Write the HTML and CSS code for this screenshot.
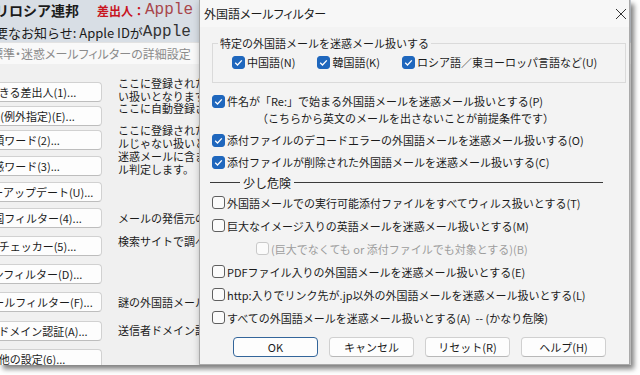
FILE: index.html
```html
<!DOCTYPE html>
<html lang="ja">
<head>
  <meta charset="UTF-8" />
  <meta name="viewport" content="width=device-width, initial-scale=1.0" />
  <title>外国語メールフィルター</title>
  <link rel="stylesheet" href="styles.css">
</head>
<body>
  <div class="screen">
    <div class="mainwin">
      <div class="maillist">
        <div class="mail-row">
          <span class="mail-subject">リロシア連邦</span>
          <span class="mail-from">差出人：</span>
          <span class="mail-addr">Apple &lt;no_reply@apple.com&gt;</span>
        </div>
        <div class="mail-row second">
          <span class="mail-preview">重要なお知らせ: Apple IDが</span>
          <span class="mail-addr dark">Apple ID</span>
        </div>
      </div>

      <div class="win-title"><span>標準・迷惑メールフィルターの詳細設定</span></div>

      <div class="win-body">
        <button class="side-btn">信頼できる差出人(1)...</button>
        <div class="desc span2">ここに登録された差出人からのメールは迷惑メールじゃな<br>い扱いとなります。<br>ここに自動登録されるのは返信した相手です。</div>
        <button class="side-btn">除外先(例外指定)(E)...</button>

        <button class="side-btn">信頼ワード(2)...</button>
        <div class="desc">ここに登録されたワードを含むメールは迷惑メー<br>ルじゃない扱いとなります。</div>

        <button class="side-btn">迷惑ワード(3)...</button>
        <div class="desc">迷惑メールに含まれるワードを登録して迷惑メー<br>ル判定します。</div>

        <button class="side-btn">フィルターアップデート(U)...</button>

        <button class="side-btn">発信元国フィルター(4)...</button>
        <div class="desc single">メールの発信元の国で判定します。</div>

        <button class="side-btn">リンクチェッカー(5)...</button>
        <div class="desc low">検索サイトで調べたURLで判定します。</div>

        <button class="side-btn">ドメインフィルター(D)...</button>

        <button class="side-btn">外国語メールフィルター(F)...</button>
        <div class="desc single">謎の外国語メールを判定します。</div>

        <button class="side-btn">送信者のドメイン認証(A)...</button>
        <div class="desc single">送信者ドメイン認証で判定します。</div>

        <button class="side-btn">その他の設定(6)...</button>
      </div>
    </div>

    <div class="dialog">
      <div class="dlg-title">
        <span>外国語メールフィルター</span>
        <svg class="close" width="12" height="12" viewBox="0 0 12 12">
          <path d="M1 1 L11 11 M11 1 L1 11" stroke="#333" stroke-width="1" fill="none"/>
        </svg>
      </div>

      <div class="dlg-body">
        <fieldset class="group">
          <legend>特定の外国語メールを迷惑メール扱いする</legend>
          <div class="group-row">
            <label class="check"><span class="cb on"><svg width="13" height="13" viewBox="0 0 13 13"><path d="M3.2 6.8 L5.5 9 L9.8 4.4" stroke="#fff" stroke-width="1.3" fill="none"/></svg></span>中国語(N)</label>
            <label class="check"><span class="cb on"><svg width="13" height="13" viewBox="0 0 13 13"><path d="M3.2 6.8 L5.5 9 L9.8 4.4" stroke="#fff" stroke-width="1.3" fill="none"/></svg></span>韓国語(K)</label>
            <label class="check"><span class="cb on"><svg width="13" height="13" viewBox="0 0 13 13"><path d="M3.2 6.8 L5.5 9 L9.8 4.4" stroke="#fff" stroke-width="1.3" fill="none"/></svg></span>ロシア語／東ヨーロッパ言語など(U)</label>
          </div>
        </fieldset>

        <div class="opts">
          <label class="check opt first"><span class="cb on"><svg width="13" height="13" viewBox="0 0 13 13"><path d="M3.2 6.8 L5.5 9 L9.8 4.4" stroke="#fff" stroke-width="1.3" fill="none"/></svg></span>件名が「Re:」で始まる外国語メールを迷惑メール扱いとする(P)</label>
          <div class="opt-note">（こちらから英文のメールを出さないことが前提条件です）</div>
          <label class="check opt"><span class="cb on"><svg width="13" height="13" viewBox="0 0 13 13"><path d="M3.2 6.8 L5.5 9 L9.8 4.4" stroke="#fff" stroke-width="1.3" fill="none"/></svg></span>添付ファイルのデコードエラーの外国語メールを迷惑メール扱いする(O)</label>
          <label class="check opt"><span class="cb on"><svg width="13" height="13" viewBox="0 0 13 13"><path d="M3.2 6.8 L5.5 9 L9.8 4.4" stroke="#fff" stroke-width="1.3" fill="none"/></svg></span>添付ファイルが削除された外国語メールを迷惑メール扱いする(C)</label>

          <div class="sep">少し危険</div>

          <div class="danger">
            <label class="check opt"><span class="cb"></span>外国語メールでの実行可能添付ファイルをすべてウィルス扱いとする(T)</label>
            <label class="check opt"><span class="cb"></span>巨大なイメージ入りの英語メールを迷惑メール扱いとする(M)</label>
            <label class="check opt sub"><span class="cb off"></span>(巨大でなくても or 添付ファイルでも対象とする)(B)</label>
            <label class="check opt"><span class="cb"></span>PDFファイル入りの外国語メールを迷惑メール扱いとする(E)</label>
            <label class="check opt"><span class="cb"></span>http:入りでリンク先が.jp以外の外国語メールを迷惑メール扱いとする(L)</label>
            <label class="check opt"><span class="cb"></span>すべての外国語メールを迷惑メール扱いとする(A)&nbsp;&nbsp;-- (かなり危険)</label>
          </div>
        </div>

        <div class="dlg-buttons">
          <button class="dlg-btn default">OK</button>
          <button class="dlg-btn">キャンセル</button>
          <button class="dlg-btn">リセット(R)</button>
          <button class="dlg-btn">ヘルプ(H)</button>
        </div>
      </div>
    </div>
  </div>
</body>
</html>
```

FILE: styles.css
```css
* {
  box-sizing: border-box;
  margin: 0;
  padding: 0;
}

body {
  font-family: "Noto Sans CJK JP", "Noto Sans", sans-serif;
  font-size: 11px;
  color: #1b1b1b;
  background: #fff;
  width: 640px;
  height: 375px;
  overflow: hidden;
}

.screen {
  position: relative;
  width: 631px;
  height: 365px;
  overflow: hidden;
  background: #f0f0f0;
  box-shadow: 3px 4px 5px rgba(0, 0, 0, 0.5);
}

/* 後ろのウィンドウ */
.maillist {
  height: 42px;
  background: #d8dee5;
  display: flex;
  flex-direction: column;
  gap: 2px;
}

.mail-row {
  height: 20px;
  display: flex;
  align-items: center;
  white-space: nowrap;
}

.mail-subject {
  font-size: 14px;
  font-weight: 700;
  margin-left: -5px;
  margin-right: 18px;
}

.mail-from {
  color: #c8141e;
  font-weight: 700;
  font-size: 12px;
}

.mail-addr {
  font-family: "Liberation Mono", monospace;
  font-size: 16px;
  color: #a8464b;
}

.mail-addr.dark {
  color: #333;
}

.mail-row.second {
  font-size: 13px;
}

.mail-preview {
  margin-left: -18px;
}

.win-title {
  height: 22px;
  background: #f9f9f9;
  border-top: 1px solid #e2e2e2;
  color: #8b8b8b;
  font-size: 12px;
  font-feature-settings: "palt";
  display: flex;
  align-items: center;
  white-space: nowrap;
}

.win-title span {
  margin-left: -9px;
}

.win-body {
  display: grid;
  grid-template-columns: 162px 1fr;
  grid-template-rows: 24px 23px 26px 26px 25px 28px 28px 28px 28px 29px 27px;
  column-gap: 16px;
  margin-left: -60px;
  padding-top: 16px;
}

.side-btn {
  grid-column: 1;
  align-self: center;
  height: 20px;
  background: #fdfdfd;
  border: 1px solid #d1d1d1;
  border-bottom-color: #bdbdbd;
  border-radius: 4px;
  font: inherit;
  color: inherit;
  white-space: nowrap;
}

.desc {
  grid-column: 2;
  align-self: start;
  margin-top: -3px;
  line-height: 12.5px;
  white-space: nowrap;
}

.desc.span2 {
  grid-row: span 2;
}

.desc.single {
  align-self: center;
  margin-top: 0;
}

.desc.low {
  margin-top: 3px;
}

/* ダイアログ */
.dialog {
  position: absolute;
  left: 199px;
  top: -1px;
  width: 431px;
  height: 366px;
  background: #f3f3f3;
  border: 1px solid #a9a9a9;
  box-shadow: 2px 3px 8px rgba(0, 0, 0, 0.35);
}

.dlg-title {
  height: 27px;
  display: flex;
  align-items: center;
  justify-content: space-between;
  padding: 0 2px 0 4px;
  background: #f7f7f7;
  font-size: 12px;
  font-feature-settings: "palt";
}

.dlg-body {
  padding: 0 3px 0 12px;
}

.group {
  margin-top: 8px;
  border: 1px solid #dadada;
  padding: 0 0 9px 19px;
}

.group legend {
  margin-left: -14px;
  padding: 0 2px;
  line-height: 16px;
}

.group-row {
  display: flex;
  gap: 22px;
  height: 22px;
  align-items: center;
}

.check {
  display: flex;
  align-items: center;
  white-space: nowrap;
}

.cb {
  width: 13px;
  height: 13px;
  margin-right: 2px;
  border: 1px solid #5f5f5f;
  border-radius: 3px;
  background: #fbfbfb;
  flex: none;
}

.cb.on {
  background: #1f67bd;
  border-color: #1f67bd;
}

.cb.on svg {
  display: block;
  margin: -1px;
}

.cb.off {
  border-color: #c9c9c9;
}

.opts {
  margin-top: 8px;
}

.opt {
  height: 22px;
}

.opt.first {
  height: 20px;
}

.opt-note {
  line-height: 14px;
  padding-bottom: 4px;
  padding-left: 45px;
  white-space: nowrap;
}

.sep {
  display: flex;
  align-items: center;
  gap: 3px;
  height: 18px;
  width: 393px;
  margin-left: -2px;
  font-size: 12px;
}

.sep::before {
  content: "";
  width: 30px;
  border-top: 1px solid #3a3a3a;
}

.sep::after {
  content: "";
  flex: 1;
  border-top: 1px solid #3a3a3a;
}

.danger .opt {
  height: 23px;
}

.opt.sub {
  padding-left: 44px;
  color: #9d9d9d;
}

.dlg-buttons {
  display: flex;
  gap: 11px;
  margin-top: 8px;
  padding-left: 21px;
}

.dlg-btn {
  width: 85px;
  height: 20px;
  background: #fdfdfd;
  border: 1px solid #d0d0d0;
  border-bottom-color: #b8b8b8;
  border-radius: 4px;
  font: inherit;
  color: #1b1b1b;
}

.dlg-btn.default {
  border-color: #33659a;
}
```
